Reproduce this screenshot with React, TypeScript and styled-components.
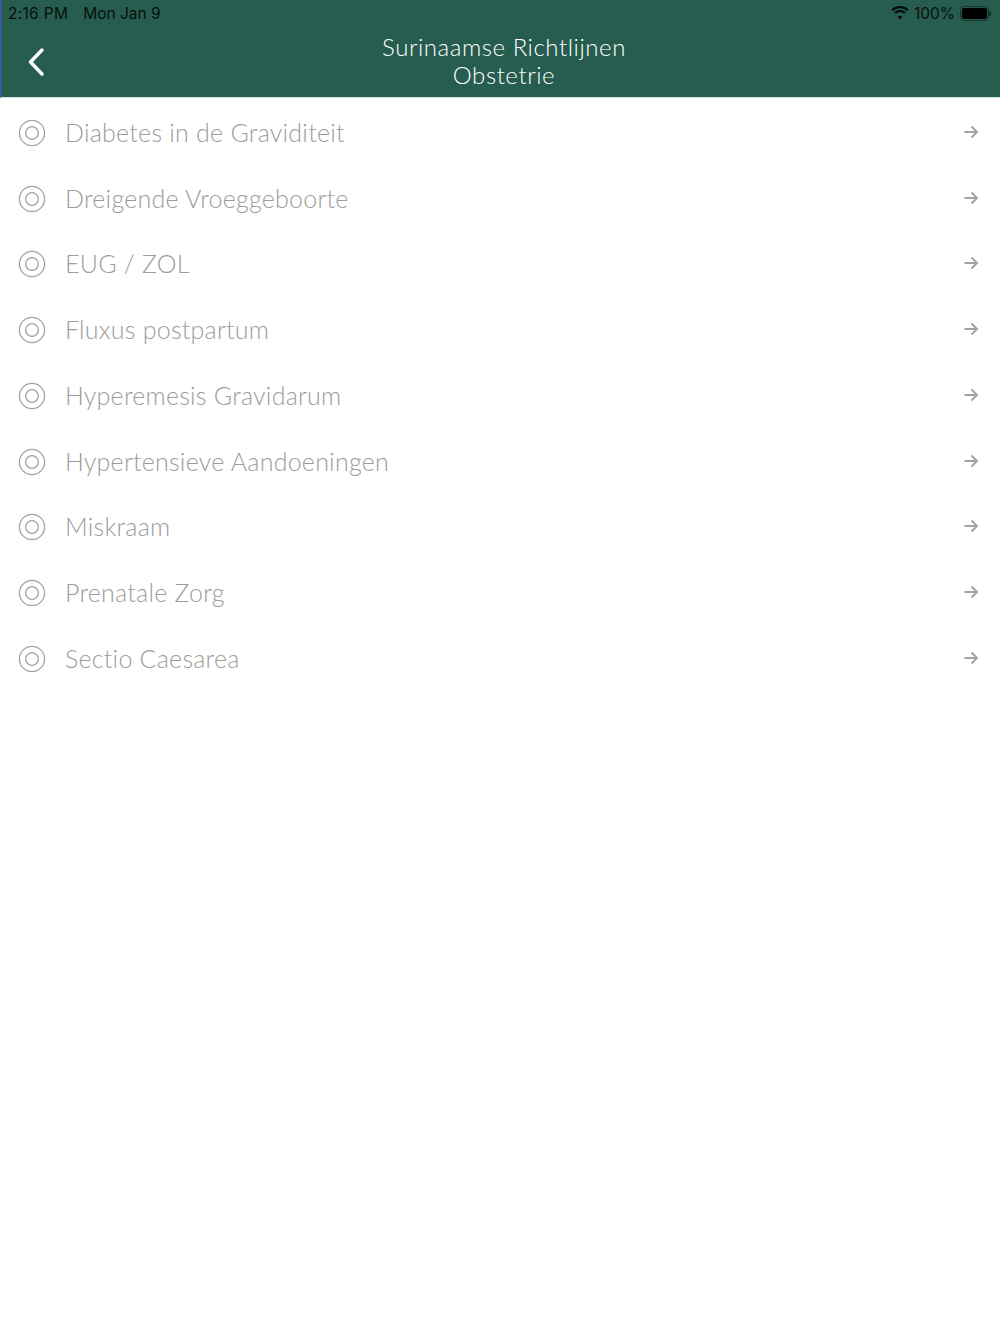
import React from "react";
import styled, { createGlobalStyle } from "styled-components";

const GlobalStyle = createGlobalStyle`
  html, body {
    margin: 0;
    padding: 0;
    background: #ffffff;
  }
`;

const Page = styled.div`
  width: 1000px;
  height: 1334px;
  background: #ffffff;
  overflow: hidden;
`;

const Header = styled.header`
  height: 98px;
  box-sizing: border-box;
  background: #265d4f;
  border-left: 2px solid #3c5a9a;
  border-bottom: 1px solid #d5e2de;
  display: flex;
  flex-direction: column;
`;

const StatusBar = styled.div`
  height: 26px;
  padding: 0 11px 0 6px;
  display: flex;
  align-items: center;
  justify-content: space-between;
  font-family: Inter, "Liberation Sans", sans-serif;
  font-size: 15.5px;
  color: #0a0f0d;
`;

const StatusGroup = styled.div<{ $gap: number }>`
  display: flex;
  align-items: center;
  gap: ${(p) => p.$gap}px;
`;

const StatusTime = styled.span`
  letter-spacing: 0.3px;
`;

const Battery = styled.div`
  width: 29px;
  height: 15px;
  box-sizing: border-box;
  border: 1px solid #17352d;
  border-radius: 4px;
  padding: 1px;
  position: relative;
  &::before {
    content: "";
    display: block;
    height: 100%;
    background: #000;
    border-radius: 2px;
  }
  &::after {
    content: "";
    position: absolute;
    right: -3px;
    top: 4px;
    width: 2px;
    height: 5px;
    background: #17352d;
    border-radius: 0 1px 1px 0;
  }
`;

const NavBar = styled.div`
  flex: 1;
  display: grid;
  grid-template-columns: 80px 1fr 80px;
  align-items: center;
`;

const BackButton = styled.button`
  background: none;
  border: 0;
  padding: 0 0 0 25px;
  display: flex;
  height: 30px;
  align-items: center;
`;

const Title = styled.h1`
  margin: 0;
  padding: 0 0 2px 6px;
  text-align: center;
  font-family: Lato, sans-serif;
  font-weight: 300;
  font-size: 24px;
  letter-spacing: 0.55px;
  line-height: 28px;
  color: #ffffff;
`;

const List = styled.ul`
  margin: 0;
  padding: 2px 0 0;
  list-style: none;
`;

const Row = styled.li`
  height: 65.75px;
  padding: 0 21px 0 18px;
  display: flex;
  align-items: center;
`;

const RowLabel = styled.span`
  flex: 1;
  margin: 0 0 2px 19px;
  font-family: Lato, sans-serif;
  font-weight: 300;
  font-size: 25px;
  letter-spacing: 0.24px;
  color: #9c9c9c;
`;

const RowArrow = styled.svg`
  margin-bottom: 2px;
`;

const items = [
  "Diabetes in de Graviditeit",
  "Dreigende Vroeggeboorte",
  "EUG / ZOL",
  "Fluxus postpartum",
  "Hyperemesis Gravidarum",
  "Hypertensieve Aandoeningen",
  "Miskraam",
  "Prenatale Zorg",
  "Sectio Caesarea",
];

const RadioIcon = () => (
  <svg width="28" height="28" viewBox="0 0 28 28" fill="none" stroke="#a3a3a3" strokeWidth="1.3">
    <circle cx="14" cy="14" r="12.6" />
    <circle cx="14" cy="14" r="6.3" />
  </svg>
);

const ArrowIcon = () => (
  <RowArrow width="16" height="14" viewBox="0 0 16 14" fill="none" stroke="#a3a3a3" strokeWidth="2">
    <path d="M1.500 7h12.500M8.500 1.500 14 7l-5.500 5.500" />
  </RowArrow>
);

const BackIcon = () => (
  <svg width="18" height="30" viewBox="0 0 18 30" fill="none" stroke="#ffffff" strokeWidth="3.4" strokeLinecap="round" strokeLinejoin="round">
    <path d="M15 3 3.500 15 15 27" />
  </svg>
);

const WifiIcon = () => (
  <svg width="18" height="14" viewBox="0 0 18 14" fill="#050a08">
    <path d="M9 2.200c2.700 0 5.100 1 7 2.700L17.600 3.200C15.300 1.100 12.300 0 9 0S2.700 1.100.4 3.200L2 4.900c1.900-1.700 4.300-2.700 7-2.700Z" />
    <path d="M9 6.200c1.600 0 3 .6 4.100 1.600l1.600-1.700C13.200 4.700 11.200 3.900 9 3.900s-4.200.8-5.700 2.200l1.600 1.700C6 6.800 7.400 6.200 9 6.200Z" />
    <path d="M9 9.800c-.9 0-1.700.3-2.300.9L9 13.600l2.300-2.900c-.6-.6-1.400-.9-2.300-.9Z" />
  </svg>
);

export default function App() {
  return (
    <Page>
      <GlobalStyle />
      <Header>
        <StatusBar>
          <StatusGroup $gap={15}>
            <StatusTime>2:16 PM</StatusTime>
            <span>Mon Jan 9</span>
          </StatusGroup>
          <StatusGroup $gap={5}>
            <WifiIcon />
            <span>100%</span>
            <Battery />
          </StatusGroup>
        </StatusBar>
        <NavBar>
          <BackButton>
            <BackIcon />
          </BackButton>
          <Title>
            Surinaamse Richtlijnen
            <br />
            Obstetrie
          </Title>
        </NavBar>
      </Header>
      <List>
        {items.map((item) => (
          <Row key={item}>
            <RadioIcon />
            <RowLabel>{item}</RowLabel>
            <ArrowIcon />
          </Row>
        ))}
      </List>
    </Page>
  );
}
